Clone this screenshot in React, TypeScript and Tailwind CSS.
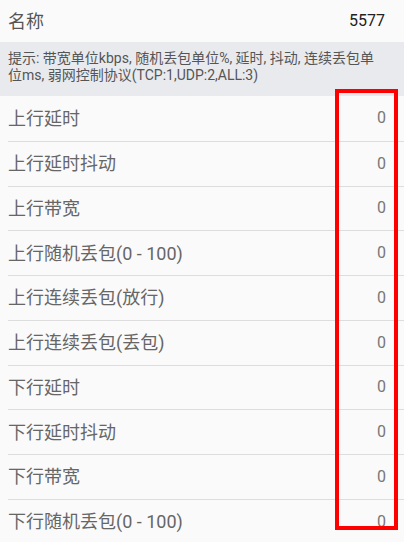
import React from "react";

const rows = [
  "上行延时",
  "上行延时抖动",
  "上行带宽",
  "上行随机丢包(0 - 100)",
  "上行连续丢包(放行)",
  "上行连续丢包(丢包)",
  "下行延时",
  "下行延时抖动",
  "下行带宽",
  "下行随机丢包(0 - 100)",
];

export default function App() {
  return (
    <div
      className="relative w-[404px] h-[542px] overflow-hidden bg-[#fafafa]"
      style={{ fontFamily: 'Roboto, "Noto Sans CJK SC", sans-serif' }}
    >
      <div className="flex items-center justify-between h-[42px] pl-2 pr-[19px]">
        <span className="text-[18px] text-[#555555]">名称</span>
        <span className="text-[16px] text-[#222222]">5577</span>
      </div>
      <div className="h-[54px] bg-[#e9eaee] pl-2 pr-[20px] pt-[8px] text-[14px] leading-[17px] text-[#555555]">
        提示: 带宽单位kbps, 随机丢包单位%, 延时, 抖动, 连续丢包单位ms, 弱网控制协议(TCP:1,UDP:2,ALL:3)
      </div>
      <div className="flex flex-col">
        {rows.map((r, i) => (
          <div key={i} className="pl-2">
            <div
              className={
                "flex items-center justify-between h-[44.75px] pr-[18px] " +
                (i > 0 ? "border-t border-[#dddddd]" : "")
              }
            >
              <span className="text-[18px] text-[#666666]">{r}</span>
              <span className="text-[16px] text-[#777777]">0</span>
            </div>
          </div>
        ))}
      </div>
      <div className="absolute left-[335px] top-[89px] w-[63px] h-[441px] border-4 border-[#ff0000]" />
    </div>
  );
}
